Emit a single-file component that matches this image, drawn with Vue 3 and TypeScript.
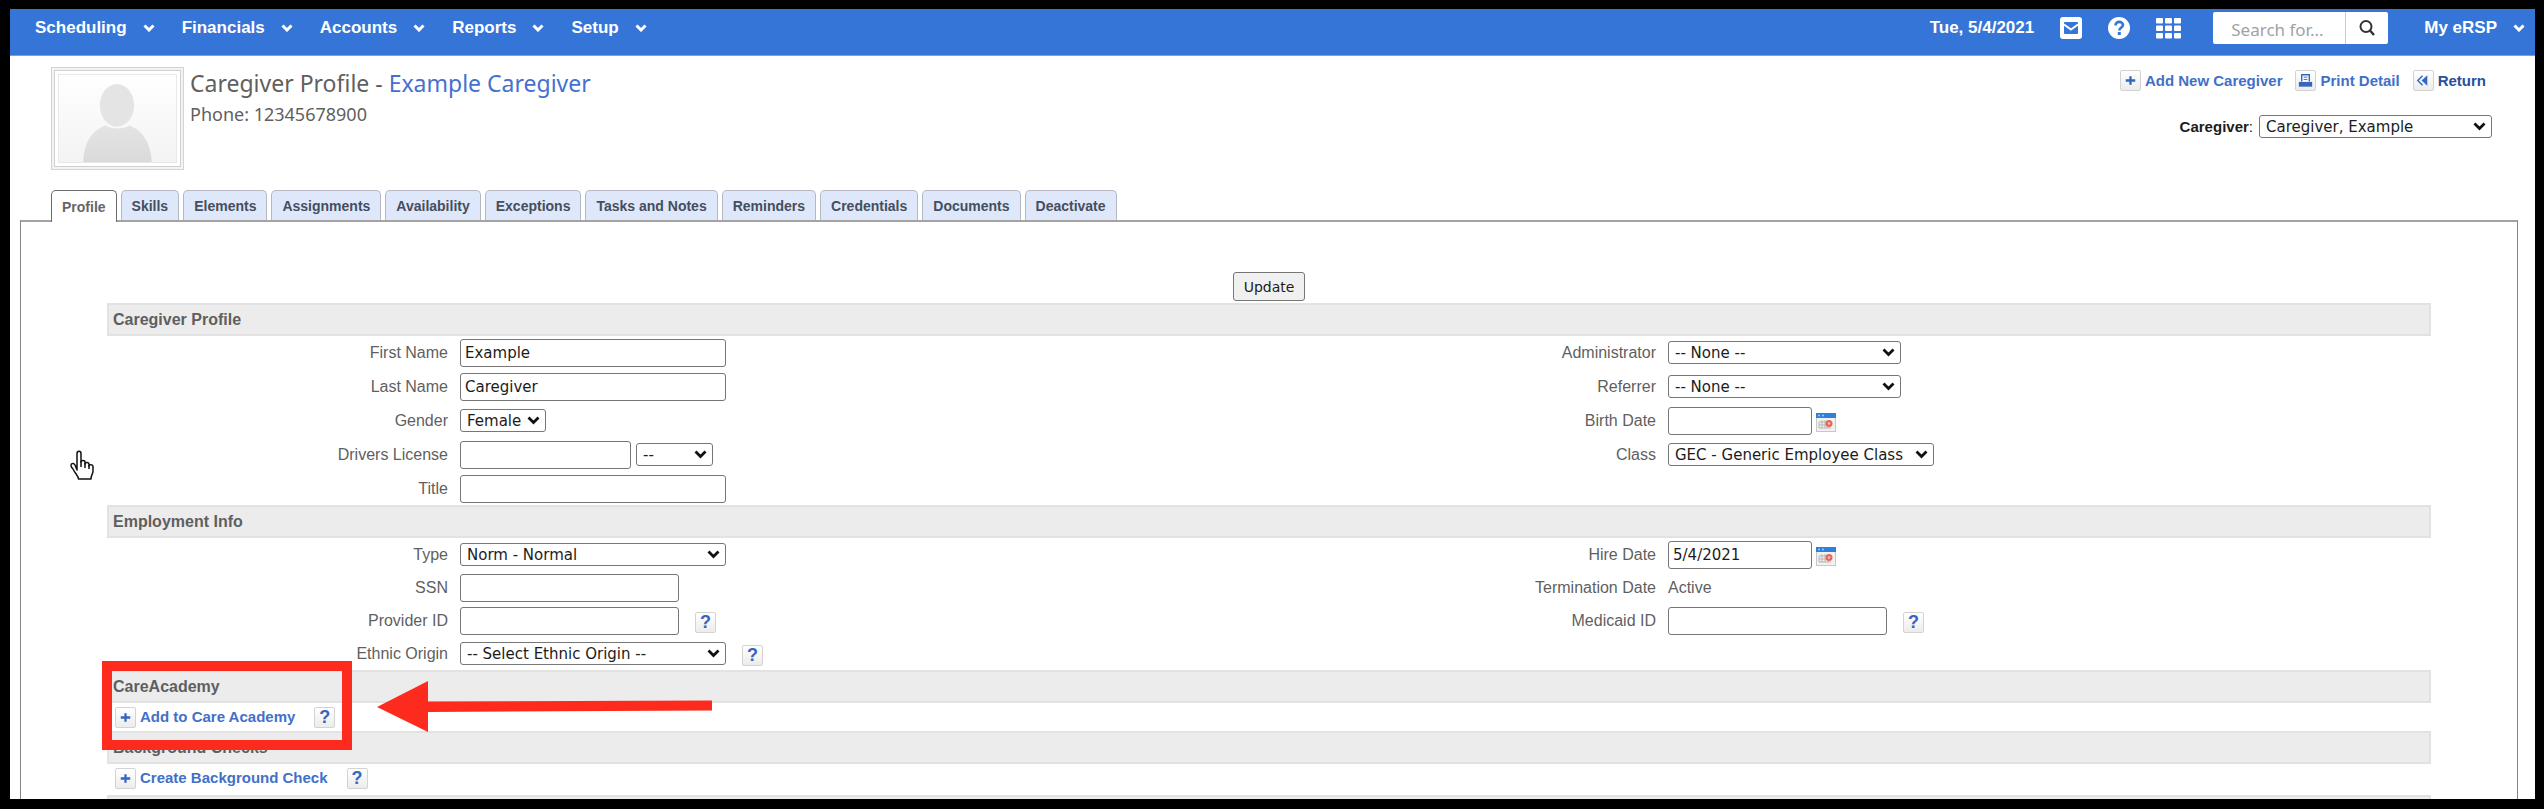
<script setup lang="ts">
import { ref } from 'vue'

interface Field {
  id: string
  label: string
  kind: 'text' | 'select' | 'static'
  size?: string
  value?: string
  state?: boolean
  help?: boolean
  calendar?: boolean
}

interface Section {
  title: string
  spaced: boolean
  left: Field[]
  right: Field[]
}

const menus = ['Scheduling', 'Financials', 'Accounts', 'Reports', 'Setup']
const tabs = [
  'Profile', 'Skills', 'Elements', 'Assignments', 'Availability', 'Exceptions',
  'Tasks and Notes', 'Reminders', 'Credentials', 'Documents', 'Deactivate',
]
const activeTab = ref('Profile')
const gridCells = [0, 9, 18]

const sections = ref<Section[]>([
  {
    title: 'Caregiver Profile',
    spaced: true,
    left: [
      { id: 'first-name', label: 'First Name', kind: 'text', size: 'xl', value: 'Example' },
      { id: 'last-name', label: 'Last Name', kind: 'text', size: 'xl', value: 'Caregiver' },
      { id: 'gender', label: 'Gender', kind: 'select', size: 'xs', value: 'Female' },
      { id: 'license', label: 'Drivers License', kind: 'text', size: 'm', value: '', state: true },
      { id: 'title', label: 'Title', kind: 'text', size: 'xl', value: '' },
    ],
    right: [
      { id: 'administrator', label: 'Administrator', kind: 'select', size: 'lg', value: '-- None --' },
      { id: 'referrer', label: 'Referrer', kind: 'select', size: 'lg', value: '-- None --' },
      { id: 'birth-date', label: 'Birth Date', kind: 'text', size: 's', value: '', calendar: true },
      { id: 'class', label: 'Class', kind: 'select', size: 'xl', value: 'GEC - Generic Employee Class' },
    ],
  },
  {
    title: 'Employment Info',
    spaced: false,
    left: [
      { id: 'type', label: 'Type', kind: 'select', size: 'xl', value: 'Norm - Normal' },
      { id: 'ssn', label: 'SSN', kind: 'text', size: 'l', value: '' },
      { id: 'provider-id', label: 'Provider ID', kind: 'text', size: 'l', value: '', help: true },
      { id: 'ethnic-origin', label: 'Ethnic Origin', kind: 'select', size: 'xl', value: '-- Select Ethnic Origin --', help: true },
    ],
    right: [
      { id: 'hire-date', label: 'Hire Date', kind: 'text', size: 's', value: '5/4/2021', calendar: true },
      { id: 'termination', label: 'Termination Date', kind: 'static', value: 'Active' },
      { id: 'medicaid-id', label: 'Medicaid ID', kind: 'text', size: 'l', value: '', help: true },
    ],
  },
])
</script>

<template>
  <div class="frame">
    <header class="topbar">
      <nav class="menu">
        <button v-for="m in menus" :key="m" type="button" class="menu-item">
          {{ m }}
          <svg class="chev" viewBox="0 0 12 8"><path d="M1.500 1.500L6 6l4.500-4.500" /></svg>
        </button>
      </nav>
      <div class="tools">
        <span class="date">Tue, 5/4/2021</span>
        <button type="button" class="tool" aria-label="Messages">
          <svg width="22" height="22" viewBox="0 0 22 22">
            <rect width="22" height="22" rx="3" fill="#fff" />
            <rect x="4" y="5" width="14" height="12" rx="1" fill="#3575d8" />
            <path d="M4 7.500l7 5 7-5" fill="none" stroke="#fff" stroke-width="2" />
          </svg>
        </button>
        <button type="button" class="tool" aria-label="Help">
          <svg width="22" height="22" viewBox="0 0 22 22">
            <circle cx="11" cy="11" r="11" fill="#fff" />
            <path d="M7.500 8.500c0-5 7.500-4.500 7.500-.5 0 2.500-3.700 2.500-3.700 5.500" fill="none" stroke="#3575d8" stroke-width="2.600" />
            <rect x="9.800" y="15" width="3" height="3" fill="#3575d8" />
          </svg>
        </button>
        <button type="button" class="tool" aria-label="Apps">
          <svg width="25" height="21" viewBox="0 0 25 21">
            <g v-for="x in gridCells" :key="x" fill="#fff">
              <rect :x="x" y="0" width="7" height="5.500" rx="1" />
              <rect :x="x" y="7.500" width="7" height="5.500" rx="1" />
              <rect :x="x" y="15" width="7" height="5.500" rx="1" />
            </g>
          </svg>
        </button>
        <form class="search" @submit.prevent>
          <input type="text" placeholder="Search for..." aria-label="Search for" />
          <button type="submit" aria-label="Search">
            <svg width="18" height="18" viewBox="0 0 18 18">
              <circle cx="8" cy="7.500" r="5.500" fill="none" stroke="#333" stroke-width="2" />
              <path d="M12 11.500l4 4.500" stroke="#333" stroke-width="2.500" />
            </svg>
          </button>
        </form>
        <button type="button" class="menu-item account">
          My eRSP
          <svg class="chev" viewBox="0 0 12 8"><path d="M1.500 1.500L6 6l4.500-4.500" /></svg>
        </button>
      </div>
    </header>

    <div class="head">
      <div class="avatar">
        <svg viewBox="0 0 118 88" preserveAspectRatio="none">
          <defs>
            <linearGradient id="photo" x1="0" y1="0" x2="0" y2="1">
              <stop offset="0" stop-color="#fff" />
              <stop offset="1" stop-color="#f3f3f3" />
            </linearGradient>
            <linearGradient id="body" x1="0" y1="0" x2="0" y2="1">
              <stop offset="0" stop-color="#e4e4e4" />
              <stop offset="1" stop-color="#dadada" />
            </linearGradient>
          </defs>
          <rect width="118" height="88" fill="url(#photo)" stroke="#e8e8e8" stroke-width="2" />
          <path d="M25 87c1-20 9-31 22-36 7 4 17 4 24 0 13 5 21 17 22 36z" fill="url(#body)" />
          <ellipse cx="58.500" cy="31" rx="17" ry="21" fill="#e4e4e4" />
        </svg>
      </div>
      <div class="who">
        <h1>Caregiver Profile - <a href="#">Example Caregiver</a></h1>
        <p>Phone: 12345678900</p>
      </div>
      <div class="actions">
        <div class="links">
          <a href="#" class="action">
            <svg class="tile" viewBox="0 0 20 20"><path d="M10 5.500v9M5 10h10" stroke="#3566be" stroke-width="2.400" /></svg>
            Add New Caregiver
          </a>
          <a href="#" class="action">
            <svg class="tile" viewBox="0 0 20 20">
              <path d="M6 11V4h8v7" fill="#fff" stroke="#3566be" stroke-width="1.500" />
              <path d="M8 6.500h4M8 9h4" stroke="#3566be" />
              <rect x="3" y="11.500" width="14" height="5" fill="#3566be" />
            </svg>
            Print Detail
          </a>
          <a href="#" class="action return">
            <svg class="tile" viewBox="0 0 20 20">
              <path d="M9 5l-5 5 5 5" fill="none" stroke="#3566be" stroke-width="1.500" />
              <path d="M14 4.500v11L8 10z" fill="#3566be" />
            </svg>
            Return
          </a>
        </div>
        <div class="picker">
          <label for="caregiver"><b>Caregiver</b>:</label>
          <select id="caregiver" class="lg"><option>Caregiver, Example</option></select>
        </div>
      </div>
    </div>

    <div class="tabs" role="tablist">
      <button
        v-for="t in tabs" :key="t" type="button" role="tab" class="tab"
        :class="{ active: t === activeTab }" :aria-selected="t === activeTab" @click="activeTab = t"
      >{{ t }}</button>
    </div>

    <main class="panel">
      <button type="button" class="update">Update</button>

      <section v-for="s in sections" :key="s.title">
        <h2>{{ s.title }}</h2>
        <div class="columns">
          <div v-for="(col, i) in [s.left, s.right]" :key="i" class="stack" :class="{ spaced: s.spaced, second: i === 1 }">
            <div v-for="f in col" :key="f.id" class="row">
              <label v-if="f.kind !== 'static'" :for="f.id">{{ f.label }}</label>
              <span v-else class="name">{{ f.label }}</span>
              <div class="control">
                <input v-if="f.kind === 'text'" :id="f.id" v-model="f.value" type="text" :class="f.size" />
                <select v-else-if="f.kind === 'select'" :id="f.id" :class="f.size">
                  <option>{{ f.value }}</option>
                </select>
                <span v-else>{{ f.value }}</span>
                <select v-if="f.state" class="tiny" aria-label="License state"><option>--</option></select>
                <button v-if="f.calendar" type="button" class="calendar" aria-label="Pick a date">
                  <svg width="20" height="19" viewBox="0 0 20 19">
                    <rect x=".5" y=".5" width="19" height="18" fill="#f1f1f1" stroke="#c8c8c8" />
                    <rect width="20" height="5" fill="#2f80dc" />
                    <path d="M2 2.500h2M6 2.500h2" stroke="#9ac9f5" stroke-width="1.500" />
                    <path d="M3 9h12M3 12h12M3 15h12M3 9v6M6 7v8M9 7v8M12 7v8" stroke="#b5b5b5" fill="none" />
                    <circle cx="13" cy="10.500" r="3.500" fill="#e4685c" />
                    <circle cx="13" cy="10.500" r="1.200" fill="#f7c4bc" />
                  </svg>
                </button>
                <button v-if="f.help" type="button" class="help">?</button>
              </div>
            </div>
          </div>
        </div>
      </section>

      <section class="marked">
        <h2>CareAcademy</h2>
        <div class="line">
          <a href="#" class="action">
            <svg class="tile" viewBox="0 0 20 20"><path d="M10 5.500v9M5 10h10" stroke="#3566be" stroke-width="2.400" /></svg>
            Add to Care Academy
          </a>
          <button type="button" class="help">?</button>
        </div>
        <div class="callout"></div>
        <svg class="arrow" width="336" height="52" viewBox="0 0 336 52">
          <path d="M0 26L51 0v20.500L335 19.500v10L51 31v20z" fill="#fd2b1d" />
        </svg>
      </section>

      <section>
        <h2>Background Checks</h2>
        <div class="line">
          <a href="#" class="action">
            <svg class="tile" viewBox="0 0 20 20"><path d="M10 5.500v9M5 10h10" stroke="#3566be" stroke-width="2.400" /></svg>
            Create Background Check
          </a>
          <button type="button" class="help">?</button>
        </div>
      </section>
      <div class="bar"></div>
    </main>

    <svg class="pointer" width="24" height="30" viewBox="0 0 24 30">
      <path
        d="M7 20V3.500C7 .5 11 .5 11 3.500V12c0-2 4-2 4 0v2c0-2 4-2 4 .500V16c0-2 4-1.500 4 .500V21c0 3-2 4-2 8H8.500c0-3-3-5-5.500-10-1-1-2-2-2-3.500 0-2.500 3-2.500 4-.5z"
        fill="#fff" stroke="#111" stroke-width="1.500" stroke-linejoin="round"
      />
      <path d="M11 11v6M15 13v5M19 15v4" stroke="#111" stroke-width="1.500" />
    </svg>
  </div>
</template>

<style>
body {
  margin: 0;
  background: #000;
}
</style>

<style scoped>
.frame {
  position: relative;
  box-sizing: border-box;
  height: 100vh;
  overflow: hidden;
  border: solid #000;
  border-width: 9px 9px 10px 10px;
  background: #fff;
  color: #5f5f5f;
  font: 16px/20px "Liberation Sans", Arial, sans-serif;
}
button,
input,
select {
  box-sizing: border-box;
  margin: 0;
  font: 15px/20px "DejaVu Sans", Verdana, sans-serif;
  color: #1c1c1c;
}
button {
  padding: 0;
  border: 0;
  background: none;
}
a {
  color: #4471cf;
  text-decoration: none;
}
.topbar {
  display: flex;
  justify-content: space-between;
  align-items: flex-start;
  box-sizing: border-box;
  height: 47px;
  padding: 3px 10px 0 25px;
  background: #3575d8;
  border-bottom: 1px solid #6ba3f2;
}
.menu,
.tools {
  display: flex;
  align-items: center;
  height: 32px;
}
.menu {
  gap: 27px;
}
.menu-item,
.date {
  color: #fff;
  font: bold 17px/20px "Liberation Sans", Arial, sans-serif;
}
.menu-item {
  display: flex;
  align-items: center;
  gap: 16px;
}
.chev {
  width: 12px;
  height: 8px;
  fill: none;
  stroke: #fff;
  stroke-width: 3;
}
.tool {
  display: flex;
  margin-left: 26px;
}
.search {
  display: flex;
  width: 175px;
  height: 32px;
  margin: 0 36px 0 32px;
  background: #fff;
  border-radius: 2px;
}
.search input {
  flex: 1;
  min-width: 0;
  padding: 4px 0 0 18px;
  border: 0;
  background: none;
  font: 17px/20px "Noto Sans", Tahoma, sans-serif;
}
.search input::placeholder {
  color: #a2a2a2;
}
.search button {
  display: flex;
  align-items: center;
  justify-content: center;
  width: 43px;
  border-left: 1px solid #ccc;
}
.head {
  display: flex;
  align-items: flex-start;
  height: 123px;
  padding: 11px 43px 0 41px;
}
.avatar {
  box-sizing: border-box;
  width: 133px;
  height: 103px;
  padding: 6px;
  border: 1px solid #d4d4d4;
  box-shadow: inset 0 0 0 2px #f3f3f3, inset 0 0 0 3px #d0d0d0;
}
.avatar svg {
  display: block;
  width: 100%;
  height: 100%;
}
.who {
  flex: 1;
  padding: 0 0 0 6px;
  font-family: "Noto Sans", Tahoma, sans-serif;
}
.who h1 {
  margin: 0;
  font-size: 23px;
  line-height: 32px;
  font-weight: normal;
}
.who p {
  margin: 3px 0 0;
  font-size: 18px;
  line-height: 24px;
}
.links {
  display: flex;
  gap: 13px;
  margin: 3px 6px 0 0;
}
.action {
  display: flex;
  align-items: center;
  gap: 4px;
  color: #4270c8;
  font-size: 15px;
  font-weight: bold;
}
.return {
  color: #26509f;
}
.tile,
.help {
  box-sizing: border-box;
  width: 21px;
  height: 21px;
  border: 1px solid #d3d3d3;
  border-radius: 2px;
  background: linear-gradient(#fff, #ececec);
}
.help {
  color: #3566be;
  font: bold 18px/19px "Liberation Sans", Arial, sans-serif;
}
.picker {
  display: flex;
  align-items: center;
  justify-content: flex-end;
  gap: 6px;
  margin-top: 24px;
  color: #1c1c1c;
  font-size: 15px;
}
.tabs {
  display: flex;
  gap: 4px;
  height: 31px;
  padding-left: 41px;
}
.tab {
  position: relative;
  height: 30px;
  padding: 0 10px;
  border: 1px solid #b4b8c0;
  border-bottom: 0;
  border-radius: 5px 5px 0 0;
  background: #dfe8fb;
  color: #454e5e;
  font: bold 14px/20px "Liberation Sans", Arial, sans-serif;
}
.tab.active {
  z-index: 1;
  height: 32px;
  border-color: #6b6b6b;
  background: #fff;
  color: #666;
}
.panel {
  margin: -1px 17px 0 10px;
  padding: 50px 86px 0;
  border: 1px solid #858585;
  border-top: 2px solid #a3a3a3;
  border-bottom: 0;
}
.update {
  display: block;
  height: 29px;
  margin: 0 auto 2px;
  padding: 0 10px;
  border: 1px solid #767676;
  border-radius: 3px;
  background: #f0f0f0;
  font-size: 14px;
}
h2,
.bar {
  box-sizing: border-box;
  height: 33px;
  margin: 0;
  padding: 3px 4px;
  border: 2px solid #e2e2e2;
  background: #ececec;
  font-size: 16px;
  line-height: 23px;
}
.columns {
  display: grid;
  grid-template-columns: 1208fr 1116fr;
}
.stack {
  display: flex;
  flex-direction: column;
}
.spaced {
  gap: 1px;
}
.row {
  display: grid;
  grid-template-columns: 353fr 855fr;
  align-items: center;
  height: 33px;
}
.second .row {
  grid-template-columns: 353fr 763fr;
}
.row label,
.name {
  padding-right: 12px;
  text-align: right;
}
.control {
  display: flex;
  align-items: center;
}
input[type="text"][id] {
  height: 28px;
  padding: 1px 4px 0;
  border: 1px solid #767676;
  border-radius: 3px;
  background: #fff;
}
select {
  appearance: none;
  height: 23px;
  padding: 0 22px 0 6px;
  border: 1px solid #767676;
  border-radius: 3px;
  background: #fff url("data:image/svg+xml,%3Csvg xmlns='http://www.w3.org/2000/svg' width='13' height='9'%3E%3Cpath d='M1.500 1.500l5 5 5-5' fill='none' stroke='%23111' stroke-width='2.800'/%3E%3C/svg%3E") no-repeat right 5px center;
  line-height: 20px;
}
.xs {
  width: 86px;
}
.s {
  width: 144px;
}
.m {
  width: 171px;
}
.l {
  width: 219px;
}
.lg {
  width: 233px;
}
.xl {
  width: 266px;
}
.tiny {
  width: 77px;
  margin-left: 5px;
}
.calendar {
  display: flex;
  margin: 4px 0 0 4px;
}
.control .help {
  margin: 4px 0 0 16px;
}
.line {
  display: flex;
  align-items: center;
  gap: 19px;
  height: 28px;
  padding-left: 8px;
}
.marked {
  position: relative;
  z-index: 1;
}
.callout {
  position: absolute;
  box-sizing: border-box;
  left: -5px;
  top: -9px;
  width: 250px;
  height: 89px;
  border: 10px solid #fd2b1d;
}
.arrow {
  position: absolute;
  left: 270px;
  top: 11px;
}
.bar {
  margin-top: 3px;
}
.pointer {
  position: absolute;
  left: 60px;
  top: 441px;
}
</style>
